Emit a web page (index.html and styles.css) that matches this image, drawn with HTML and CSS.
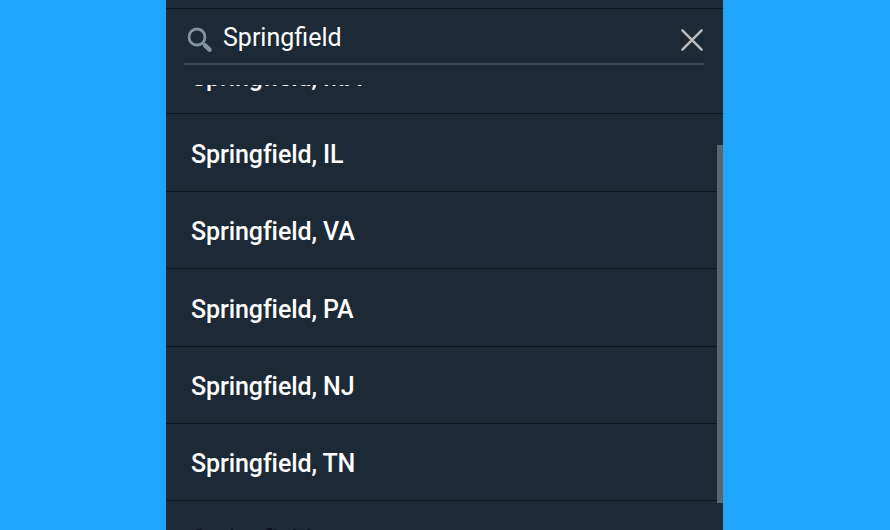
FILE: index.html
```html
<!DOCTYPE html>
<html lang="en">
<head>
<meta charset="utf-8">
<title>Location search</title>
<link rel="stylesheet" href="styles.css">
</head>
<body>
<main class="panel">
  <header class="search">
    <div class="field">
      <svg class="search-icon" viewBox="0 0 28 28" aria-hidden="true"><circle cx="11" cy="11" r="8" fill="none" stroke="#8294a2" stroke-width="2.8"/><path d="M16.5 16.5l3 3" stroke="#8294a2" stroke-width="2.5"/><path d="M19 19.4l4.5 4.2" stroke="#8294a2" stroke-width="4.5" stroke-linecap="round"/></svg>
      <span class="query">Springfield</span>
      <svg class="clear-icon" viewBox="0 0 24 24" aria-hidden="true"><path d="M2.4 2.4l19.2 19.2M21.6 2.4L2.4 21.6" stroke="#bcbdbf" stroke-width="2.5" stroke-linecap="round"/></svg>
    </div>
  </header>
  <div class="results">
    <ul class="list">
      <li class="first">Springfield, MA</li>
      <li>Springfield, IL</li>
      <li>Springfield, VA</li>
      <li>Springfield, PA</li>
      <li>Springfield, NJ</li>
      <li>Springfield, TN</li>
      <li class="dim">Springfield</li>
    </ul>
    <div class="thumb"></div>
  </div>
</main>
</body>
</html>
```

FILE: styles.css
```css
* { box-sizing: border-box; }
body { margin: 0; height: 530px; overflow: hidden; background: #1fa5fc; font-family: Roboto, sans-serif; color: #fff; }
.panel { width: 557px; height: 530px; margin-left: 166px; background: #1c2936; display: flex; flex-direction: column; overflow: hidden; }
.search { height: 85px; flex: none; padding: 9px 19px 0 18px; background: linear-gradient(#0c151a, #0c151a) 0 8px / 100% 1px no-repeat; }
.field { height: 56px; display: flex; align-items: center; border-bottom: 2px solid #364a5b; }
.search-icon { width: 28px; height: 28px; margin: 8px 0 0 2px; }
.query { flex: 1; margin: 3px 0 0 9px; font-size: 25px; line-height: 30px; }
.clear-icon { width: 24px; height: 24px; margin-top: 8px; }
.results { position: relative; flex: 1; overflow: hidden; }
.list { list-style: none; margin: -48px 0 0; padding: 0; }
.list li { height: 77.4px; padding: 2.4px 25px 0; border-bottom: 1px solid #0c151a; font-size: 25px; font-weight: 500; line-height: 76px; letter-spacing: -0.1px; font-variant-ligatures: none; }
.list .first { padding-top: 3px; }
.list .dim { padding-top: 1px; color: #080e20; }
.thumb { position: absolute; top: 60px; right: 0; width: 6px; height: 358px; background: #596571; }
```
